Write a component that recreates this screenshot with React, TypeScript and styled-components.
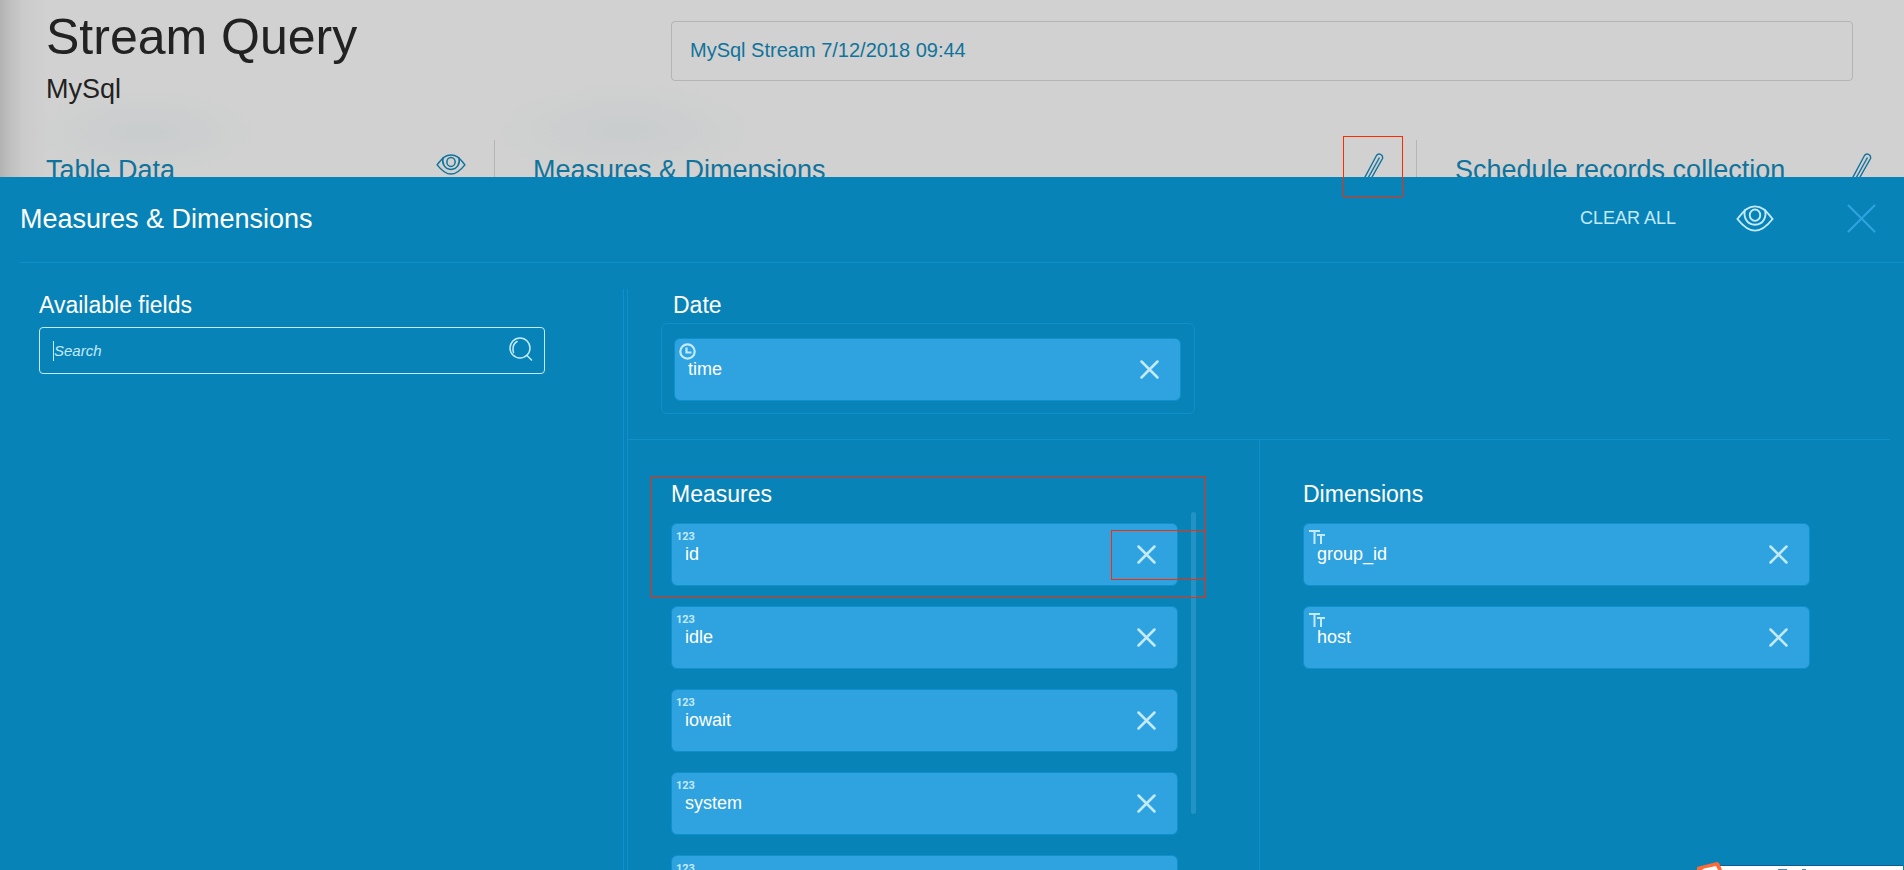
import React from "react";
import styled, { createGlobalStyle } from "styled-components";

const Global = createGlobalStyle`
  *, *::before, *::after { box-sizing: border-box; }
  body { margin: 0; font-family: "Liberation Sans", Arial, sans-serif; background: #d1d1d1; overflow: hidden; }
  h1, h2, h3, p, ul { margin: 0; padding: 0; font-weight: 400; }
  button { border: 0; background: none; padding: 0; font: inherit; color: inherit; cursor: pointer; display: flex; }
`;

const Screen = styled.div`
  position: relative;
  display: flex;
  flex-direction: column;
  height: 100vh;
  overflow: hidden;
`;

const Backdrop = styled.header`
  height: 177px;
  flex: none;
  overflow: hidden;
  color: #10739c;
  background:
    linear-gradient(90deg, #b2b2b2 0, #bfbfbf 10px, #cbcbcb 24px, rgba(209, 209, 209, 0) 48px),
    radial-gradient(120px 44px at 145px 132px, #cacdce 10%, rgba(209, 209, 209, 0)),
    radial-gradient(140px 50px at 625px 130px, #cacdce 10%, rgba(209, 209, 209, 0)),
    #d1d1d1;
`;

const TitleRow = styled.div`
  display: flex;
  height: 140px;
  padding: 8px 51px 0 46px;
`;

const TitleBlock = styled.div`
  width: 625px;
  flex: none;
  color: #222;
`;

const Title = styled.h1`
  font-size: 50px;
  line-height: 58px;
`;

const Subtitle = styled.p`
  margin-top: 8px;
  font-size: 27px;
  line-height: 30px;
`;

const NameInput = styled.input`
  flex: 1;
  min-width: 0;
  height: 60px;
  margin-top: 13px;
  padding: 0 18px 2px;
  border: 1px solid #b4b4b4;
  border-radius: 4px;
  background: transparent;
  color: #10739c;
  font: 20px "Liberation Sans", Arial, sans-serif;
  outline: none;
`;

const Sections = styled.div`
  display: grid;
  grid-template-columns: 494fr 922fr 488fr;
  height: 60px;
`;

const Section = styled.section`
  display: flex;
  justify-content: space-between;
  padding: 13px 28px 0 38px;
  border-left: 1px solid #b4b4b4;
  &:first-child { border-left: 0; padding-left: 46px; }
`;

const SectionTitle = styled.h2`
  font-size: 27px;
  line-height: 34px;
`;

const Panel = styled.main`
  flex: 1;
  min-height: 0;
  display: flex;
  flex-direction: column;
  background: #0883b7;
  color: #fff;
`;

const PanelHeader = styled.div`
  flex: none;
  display: flex;
  align-items: center;
  height: 86px;
  margin: 0 0 0 20px;
  padding: 0 28px 2px 0;
  border-bottom: 1px solid #0d90cb;
`;

const PanelTitle = styled.h2`
  flex: 1;
  font-size: 27px;
  line-height: 32px;
`;

const Actions = styled.div`
  display: flex;
  align-items: center;
  color: #c3eaff;
`;

const ClearButton = styled.button`
  margin-right: 60px;
  font-size: 18px;
`;

const CloseButton = styled.button`
  margin-left: 73px;
  color: #2fa3e0;
`;

const Body = styled.div`
  flex: 1;
  min-height: 0;
  display: flex;
  padding: 26px 14px 0 20px;
`;

const Fields = styled.aside`
  width: 604px;
  flex: none;
  padding: 0 78px 0 19px;
  border-right: 1px solid #0d90cb;
`;

const Heading = styled.h3`
  font-size: 23px;
  line-height: 32px;
`;

const SearchBox = styled.label`
  display: flex;
  align-items: center;
  height: 47px;
  margin-top: 6px;
  padding: 0 11px 0 13px;
  border: 1px solid #c3eaff;
  border-radius: 4px;
  color: #c3eaff;
  svg { margin-bottom: 4px; }
`;

const SearchInput = styled.input`
  flex: 1;
  min-width: 0;
  padding: 0;
  border: 0;
  outline: 0;
  background: none;
  color: #fff;
  font: italic 15px "Liberation Sans", Arial, sans-serif;
  &::placeholder { color: #c3eaff; opacity: 1; }
`;

const Caret = styled.span`
  width: 1px;
  height: 20px;
  background: #c3eaff;
`;

const Selection = styled.div`
  flex: 1;
  min-width: 0;
  display: flex;
  flex-direction: column;
  margin-left: 3px;
  border-left: 1px solid #0d90cb;
`;

const DateArea = styled.section`
  flex: none;
  height: 151px;
  padding-left: 33px;
  border-bottom: 1px solid #0d90cb;
  ${Heading} { margin-left: 12px; }
`;

const DropZone = styled.div`
  width: 534px;
  height: 91px;
  margin-top: 2px;
  padding: 14px 12px;
  border: 1px solid #0d90cb;
  border-radius: 6px;
`;

const Lists = styled.div`
  flex: 1;
  min-height: 0;
  display: grid;
  grid-template-columns: 1fr 1fr;
`;

const ListColumn = styled.section`
  position: relative;
  padding: 38px 0 0 43px;
  overflow: hidden;
  & + & { border-left: 1px solid #0d90cb; }
`;

const CardList = styled.ul`
  display: flex;
  flex-direction: column;
  gap: 20px;
  margin-top: 13px;
  list-style: none;
`;

const Card = styled.div`
  display: flex;
  align-items: center;
  width: 507px;
  height: 63px;
  padding: 0 21px 0 4px;
  border: 1px solid #0d90cb;
  border-radius: 6px;
  background: #2fa3e0;
  color: #c3eaff;
`;

const CardText = styled.div`
  flex: 1;
  align-self: stretch;
  padding-top: 4px;
`;

const Kind = styled.span`
  display: flex;
  height: 17px;
  align-items: center;
  font: bold 11px/19px Roboto, sans-serif;
`;

const CardName = styled.p`
  margin-left: 9px;
  color: #fff;
  font-size: 18px;
  line-height: 18px;
`;

const Scrollbar = styled.div`
  position: absolute;
  top: 72px;
  left: 563px;
  width: 5px;
  height: 302px;
  border-radius: 3px;
  background: #2392c4;
`;

const Mark = styled.div<{ $x: number; $y: number; $w: number; $h: number }>`
  position: absolute;
  left: ${(p) => p.$x}px;
  top: ${(p) => p.$y}px;
  width: ${(p) => p.$w}px;
  height: ${(p) => p.$h}px;
  border: 1px solid #ff2a00;
  pointer-events: none;
`;

const Badge = styled.svg`
  position: absolute;
  right: 0;
  bottom: 0;
`;

const Eye = ({ width, height }: { width: number; height: number }) => (
  <svg width={width} height={height} viewBox="0 0 40 28" fill="none" stroke="currentColor" strokeWidth="2">
    <path d="M1.500 14.500C9 5 13 1.200 20 1.200S31 5 38.500 14.500C31 24 26 26.800 20 26.800S9 24 1.500 14.500Z" />
    <path d="M9.500 4.500C7.500 12 11 20.500 20 20.500S32.500 12 30.500 4.500" />
    <ellipse cx="20" cy="10.500" rx="5.500" ry="6" />
  </svg>
);

const Pencil = () => (
  <svg width="25" height="34" viewBox="0 0 25 34" fill="none" stroke="currentColor" strokeWidth="1.400">
    <path d="M0.500 32L1.500 25L13.500 2.500C15.500 -0.500 20.500 1.500 19.500 5.500L6.500 28.500Z" />
    <path d="M4.500 26L16.500 4.500" />
  </svg>
);

const Cross = ({ size, weight }: { size: number; weight: number }) => (
  <svg width={size} height={size} viewBox={`0 0 ${size} ${size}`} stroke="currentColor" strokeWidth={weight} strokeLinecap="round">
    <path d={`M1.500 1.500L${size - 1.5} ${size - 1.5}M${size - 1.5} 1.500L1.500 ${size - 1.5}`} />
  </svg>
);

const Lens = () => (
  <svg width="24" height="24" viewBox="0 0 24 24" fill="none" stroke="currentColor" strokeWidth="1.500" strokeLinecap="round">
    <circle cx="11" cy="11" r="10" />
    <path d="M18 18.500L22.500 23M4.500 15.500Q2.500 8 8 4.500" />
  </svg>
);

const Clock = () => (
  <svg width="17" height="17" viewBox="0 0 17 17" fill="none" stroke="currentColor" strokeWidth="2.200">
    <circle cx="8.500" cy="8.500" r="7.200" />
    <path d="M7.500 4.500V9.500H12.500" />
  </svg>
);

const TextKind = () => (
  <svg width="17" height="14" viewBox="0 0 17 14" fill="none" stroke="currentColor" strokeWidth="2">
    <path d="M1 1H12M6.500 1V14M9 5H17M13 5V14" />
  </svg>
);

const FieldCard = ({ name, kind }: { name: string; kind: React.ReactNode }) => (
  <Card>
    <CardText>
      <Kind>{kind}</Kind>
      <CardName>{name}</CardName>
    </CardText>
    <button aria-label={`Remove ${name}`}><Cross size={19} weight={2.5} /></button>
  </Card>
);

export default function App() {
  return (
    <>
      <Global />
      <Screen>
        <Backdrop>
          <TitleRow>
            <TitleBlock>
              <Title>Stream Query</Title>
              <Subtitle>MySql</Subtitle>
            </TitleBlock>
            <NameInput aria-label="Stream name" defaultValue="MySql Stream 7/12/2018 09:44" />
          </TitleRow>
          <Sections>
            <Section>
              <SectionTitle>Table Data</SectionTitle>
              <button aria-label="View table data"><Eye width={30} height={23} /></button>
            </Section>
            <Section>
              <SectionTitle>Measures &amp; Dimensions</SectionTitle>
              <button aria-label="Edit measures and dimensions"><Pencil /></button>
            </Section>
            <Section>
              <SectionTitle>Schedule records collection</SectionTitle>
              <button aria-label="Edit schedule"><Pencil /></button>
            </Section>
          </Sections>
        </Backdrop>
        <Panel>
          <PanelHeader>
            <PanelTitle>Measures &amp; Dimensions</PanelTitle>
            <Actions>
              <ClearButton>CLEAR ALL</ClearButton>
              <button aria-label="Preview"><Eye width={38} height={27} /></button>
              <CloseButton aria-label="Close"><Cross size={29} weight={2} /></CloseButton>
            </Actions>
          </PanelHeader>
          <Body>
            <Fields>
              <Heading>Available fields</Heading>
              <SearchBox>
                <Caret />
                <SearchInput placeholder="Search" aria-label="Search" />
                <Lens />
              </SearchBox>
            </Fields>
            <Selection>
              <DateArea>
                <Heading>Date</Heading>
                <DropZone><FieldCard name="time" kind={<Clock />} /></DropZone>
              </DateArea>
              <Lists>
                <ListColumn>
                  <Heading>Measures</Heading>
                  <CardList>
                    {["id", "idle", "iowait", "system", "user"].map((name) => (
                      <li key={name}><FieldCard name={name} kind="123" /></li>
                    ))}
                  </CardList>
                  <Scrollbar />
                </ListColumn>
                <ListColumn>
                  <Heading>Dimensions</Heading>
                  <CardList>
                    {["group_id", "host"].map((name) => (
                      <li key={name}><FieldCard name={name} kind={<TextKind />} /></li>
                    ))}
                  </CardList>
                </ListColumn>
              </Lists>
            </Selection>
          </Body>
        </Panel>
        <Mark $x={1343} $y={136} $w={60} $h={61} />
        <Mark $x={651} $y={476} $w={555} $h={122} />
        <Mark $x={1111} $y={530} $w={95} $h={50} />
        <Badge width="207" height="8" viewBox="0 0 207 8" aria-hidden="true">
          <path d="M20 4H206V8H20Z" fill="#fff" />
          <path d="M20 3.500H206" stroke="#0b5f94" />
          <path d="M0 8V5L20 0Q22 0 23 3L25 8Z" fill="#ff6a35" />
          <path d="M5 8L7 6.500L19 4L21 8Z" fill="#fff" />
          <path d="M81 7.500H90M105 7.500H109" stroke="#4a86c0" />
        </Badge>
      </Screen>
    </>
  );
}
